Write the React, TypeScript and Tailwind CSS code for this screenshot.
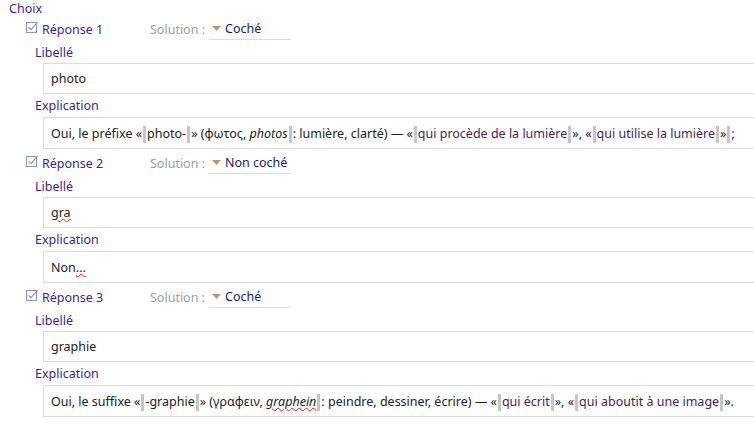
import React from 'react';

type Part = string | { m: string } | { i: string; wavy?: boolean } | { q: string };

function Marker() {
  return <span className="mx-[1px] inline-block h-[17px] w-[3px] align-[-5px] bg-[#c6c6c6]" />;
}

function CheckIcon() {
  return (
    <svg width="13" height="13" viewBox="0 0 13 13" className="shrink-0">
      <rect x="0.5" y="1.5" width="10" height="10" fill="none" stroke="#8f93bd" strokeWidth="1" />
      <path d="M2.5 6.2 L5 8.6 L11.5 1.2" fill="none" stroke="#8f93bd" strokeWidth="1.2" />
    </svg>
  );
}

const wavy = 'underline decoration-wavy decoration-[#e02020] decoration-1';

function RichText({ parts }: { parts: Part[] }) {
  return (
    <span>
      {parts.map((p, i) => {
        if (typeof p === 'string') return <span key={i}>{p}</span>;
        if ('m' in p) return <Marker key={i} />;
        if ('q' in p) return <span key={i} className="text-[#4b1d52]">{p.q}</span>;
        return (
          <em key={i} className={p.wavy ? wavy : ''}>
            {p.i}
          </em>
        );
      })}
    </span>
  );
}

function Field({
  label,
  labelH,
  boxH,
  children,
}: {
  label: string;
  labelH: string;
  boxH: string;
  children: React.ReactNode;
}) {
  return (
    <>
      <div className={`flex items-center pl-[35px] pt-[2px] text-[#3d1f8f] ${labelH}`}>{label}</div>
      <div
        className={`ml-[43px] flex items-center whitespace-nowrap border-y border-l border-[#d9dbe5] pl-[7px] pt-[2px] text-[#222] ${boxH}`}
      >
        {children}
      </div>
    </>
  );
}

const M = { m: '' };

const answers: { n: number; sol: string; label: React.ReactNode; expl: React.ReactNode }[] = [
  {
    n: 1,
    sol: 'Coché',
    label: 'photo',
    expl: (
      <RichText
        parts={[
          'Oui, le préfixe «',
          M,
          'photo-',
          M,
          '» (φωτος, ',
          { i: 'photos' },
          M,
          ': lumière, clarté) — «',
          M,
          { q: 'qui procède de la lumière' },
          M,
          '», «',
          M,
          { q: 'qui utilise la lumière' },
          M,
          '»',
          M,
          ';',
        ]}
      />
    ),
  },
  {
    n: 2,
    sol: 'Non coché',
    label: <span className={wavy}>gra</span>,
    expl: (
      <span>
        Non<span className={wavy}>...</span>
      </span>
    ),
  },
  {
    n: 3,
    sol: 'Coché',
    label: 'graphie',
    expl: (
      <RichText
        parts={[
          'Oui, le suffixe «',
          M,
          '-graphie',
          M,
          '» (γραφειν, ',
          { i: 'graphein', wavy: true },
          M,
          ': peindre, dessiner, écrire) — «',
          M,
          { q: 'qui écrit' },
          M,
          '», «',
          M,
          { q: 'qui aboutit à une image' },
          M,
          '».',
        ]}
      />
    ),
  },
];

export default function App() {
  return (
    <div
      className="h-[425px] w-[754px] overflow-hidden bg-white text-[12.5px]"
      style={{ fontFamily: '"Noto Sans", "Open Sans", sans-serif' }}
    >
      <div className="flex h-[17px] items-center pl-[9px] pt-[1px] text-[#3d1f8f]">Choix</div>
      {answers.map((a) => (
        <div key={a.n} className="mb-[2px]">
          {/* Header */}
          <div className="flex h-[24px] items-center pl-[26px] pt-[2px]">
            <div className="-translate-y-[3px]">
              <CheckIcon />
            </div>
            <div className="ml-[3px] w-[108px] text-[#3d1f8f]">Réponse {a.n}</div>
            <span className="text-[#a0a0a0]">Solution :</span>
            <div className="ml-[4px] flex h-[21px] w-[82px] items-center self-start border-b border-[#d9dbe5] pl-[3px]">
              <svg width="9" height="6" viewBox="0 0 9 6" className="mr-[4px]">
                <path d="M0 0 L9 0 L4.5 5 Z" fill="#b39a72" />
              </svg>
              <span className="text-[#1b1b5e]">{a.sol}</span>
            </div>
          </div>
          <Field label="Libellé" labelH="h-[22px]" boxH="h-[31px]">
            {a.label}
          </Field>
          <Field label="Explication" labelH="h-[23px]" boxH="h-[32px]">
            {a.expl}
          </Field>
        </div>
      ))}
    </div>
  );
}
